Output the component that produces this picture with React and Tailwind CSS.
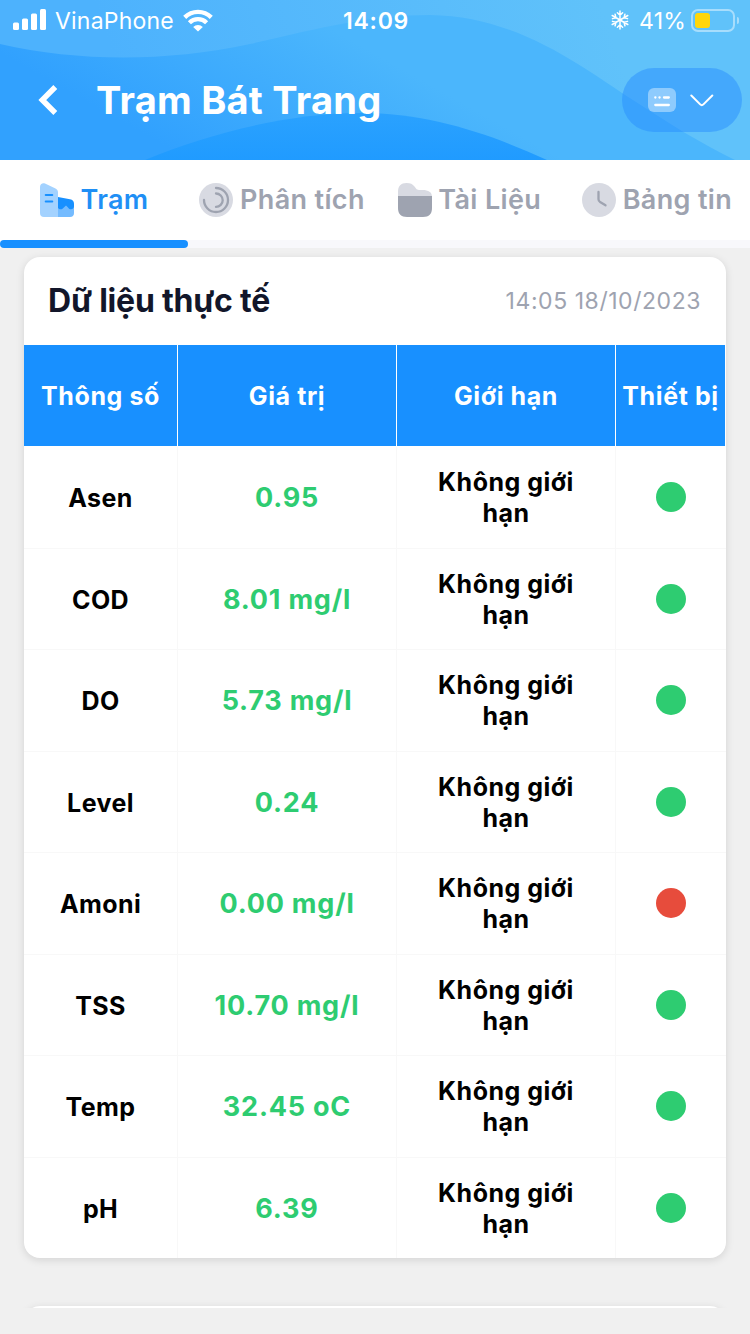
import { useState } from 'react'
import clsx from 'clsx'

const rows = [
  { name: 'Asen', value: '0.95', ok: true },
  { name: 'COD', value: '8.01 mg/l', ok: true },
  { name: 'DO', value: '5.73 mg/l', ok: true },
  { name: 'Level', value: '0.24', ok: true },
  { name: 'Amoni', value: '0.00 mg/l', ok: false },
  { name: 'TSS', value: '10.70 mg/l', ok: true },
  { name: 'Temp', value: '32.45 oC', ok: true },
  { name: 'pH', value: '6.39', ok: true },
]

/* ── ICONS ── */

function StationIcon() {
  return (
    <svg width="34" height="34" viewBox="0 0 34 34" className="shrink-0">
      <path d="M0 4C0 1.200 2.400-.6 5 .5L15 5.200c2 .9 3 2.200 3 4.300V34H4c-2.600 0-4-1.400-4-4Z" fill="#a3d2ff" />
      <path d="M18 22h16v8c0 2.600-1.400 4-4 4H18Z" fill="#74bbff" />
      <path d="M18 14l12 2.200c2.700.5 4 2 4 4.600v2.400c0 3.400-4.300 4.200-6 1.200l-2-2-3.500 3.400c-1.500 1-3.500.6-4.500-.8Z" fill="#1890ff" />
      <path d="M5.800 12h6.400M5.800 18.500h6.400" stroke="#1890ff" strokeWidth="2.200" strokeLinecap="round" />
    </svg>
  )
}

function AnalysisIcon() {
  return (
    <svg width="34" height="34" viewBox="0 0 34 34" fill="none" className="shrink-0">
      <circle cx="17" cy="17" r="17" fill="#d8dae2" />
      <path d="M17 5a12 12 0 1 1-12 12" stroke="#9ea3b0" strokeWidth="2.300" strokeLinecap="round" />
      <path d="M17 10.500a6.700 6.700 0 0 1 0 13.400" stroke="#9ea3b0" strokeWidth="2.300" strokeLinecap="round" />
    </svg>
  )
}

function FolderIcon() {
  return (
    <svg width="34" height="34" viewBox="0 0 34 34" className="shrink-0">
      <path d="M0 14V9c0-6 3-9 8.500-9 4 0 6 1 8 3.600l1.500 2c.8 1 1.500 1.400 3 1.400h3.500C30.500 7 34 9 34 14Z" fill="#d8dae2" />
      <path d="M0 13h34v12c0 6-3 9-9 9H9c-6 0-9-3-9-9Z" fill="#9ea3b0" />
    </svg>
  )
}

function ClockIcon() {
  return (
    <svg width="34" height="34" viewBox="0 0 34 34" fill="none" className="shrink-0">
      <circle cx="17" cy="17" r="17" fill="#d8dae2" />
      <path d="M16.500 9v7.200c0 1.300.5 2.200 1.600 2.900l5.400 3.200" stroke="#9ea3b0" strokeWidth="2.300" strokeLinecap="round" />
    </svg>
  )
}

function SignalIcon() {
  return (
    <svg width="33" height="22" viewBox="0 0 33 22" fill="#fff">
      <rect x="0" y="13.500" width="6" height="7.500" rx="1.500" />
      <rect x="9" y="9.500" width="6" height="11.500" rx="1.500" />
      <rect x="18" y="4.500" width="6" height="16.500" rx="1.500" />
      <rect x="27" y="0" width="6" height="21" rx="1.500" />
    </svg>
  )
}

function WifiIcon() {
  return (
    <svg width="30" height="23" viewBox="0 0 30 23" fill="none" stroke="#fff" strokeWidth="4.300">
      <path d="M1.700 8.400a19 19 0 0 1 26.600 0" />
      <path d="M6.400 13.700a12.200 12.200 0 0 1 17.200 0" />
      <path d="M10.200 18a6.700 6.700 0 0 1 9.600 0L15 22.600Z" fill="#fff" stroke="none" />
    </svg>
  )
}

function SnowIcon() {
  return (
    <svg width="18" height="20" viewBox="0 0 18 20" fill="none" stroke="#fff" strokeWidth="1.500" strokeLinecap="round">
      {[0, 60, 120, 180, 240, 300].map(a => (
        <path key={a} d="M9 10V1M6.400 2.800 9 5.300l2.600-2.500" transform={`rotate(${a} 9 10)`} />
      ))}
    </svg>
  )
}

/* ── HEADER ── */

function Waves() {
  return (
    <svg className="absolute inset-0" width="750" height="160" viewBox="0 0 750 160">
      <defs>
        <linearGradient id="top" gradientUnits="userSpaceOnUse" x1="150" y1="160" x2="600" y2="0">
          <stop offset="0" stopColor="#4db2fd" />
          <stop offset="1" stopColor="#60c2fa" />
        </linearGradient>
        <linearGradient id="mid" gradientUnits="userSpaceOnUse" x1="190" y1="160" x2="280" y2="0">
          <stop offset="0" stopColor="#31a1fe" />
          <stop offset="1" stopColor="#4bb6fc" />
        </linearGradient>
        <linearGradient id="low" gradientUnits="userSpaceOnUse" x1="0" y1="160" x2="0" y2="110">
          <stop offset="0" stopColor="#209bff" />
          <stop offset="1" stopColor="#2ba2fe" />
        </linearGradient>
      </defs>
      <rect width="750" height="160" fill="url(#top)" />
      <path d="M0 44C80 62 165 62 250 44C320 28 370 15 430 15C520 16 585 70 633 100C670 124 700 143 735 160H0Z" fill="url(#mid)" />
      <path d="M145 160C210 133 290 113 360 113C430 113 490 134 547 160Z" fill="url(#low)" />
    </svg>
  )
}

function StatusBar() {
  return (
    <div className="relative flex h-10 items-center text-[23px] text-white">
      <div className="flex flex-1 items-center pl-[13px]">
        <SignalIcon />
        <span className="ml-[9px] mr-[9px] pt-0.5 tracking-[0.2px]">VinaPhone</span>
        <WifiIcon />
      </div>
      <span className="pt-0.5 font-semibold tracking-[0.8px]">14:09</span>
      <div className="flex flex-1 items-center justify-end pr-[11px]">
        <SnowIcon />
        <span className="ml-[10px] mr-[5px] pt-0.5 tracking-[0.2px]">41%</span>
        <div className="h-[23px] w-[44px] rounded-[7px] border-2 border-white/45 p-[2px]">
          <div className="h-[15px] w-[15px] rounded-[3px] bg-[#ffd60a]" />
        </div>
        <div className="ml-[2px] h-[7px] w-[2px] rounded-r-full bg-white/45" />
      </div>
    </div>
  )
}

function Header() {
  return (
    <header className="relative h-[160px] overflow-hidden">
      <Waves />
      <StatusBar />
      <div className="relative flex h-[120px] items-center pl-[38px] pr-2">
        <svg width="20" height="30" viewBox="0 0 20 30" fill="none" stroke="#fff" strokeWidth="5.500">
          <path d="M17.300 2 4.300 15l13 13" />
        </svg>
        <h1 className="ml-[38px] flex-1 text-[38px] font-bold tracking-[0.25px] text-white">Trạm Bát Trang</h1>
        <button className="flex h-16 w-[120px] items-center gap-[14px] rounded-full bg-[#2389ff]/45 pl-[26px]">
          <svg width="28" height="24" viewBox="0 0 28 24" fill="none" stroke="#fff" strokeWidth="2.300" strokeLinecap="round">
            <rect width="28" height="24" rx="6" fill="#fff" fillOpacity=".4" stroke="none" />
            <path d="M7.300 9.500h.1M11.500 9.500h.1M16 9.500h4.800M7.300 17h13.500" />
          </svg>
          <svg width="24" height="14" viewBox="0 0 24 14" fill="none" stroke="#fff" strokeWidth="2" strokeLinecap="round">
            <path d="m1.300 2.500 8.900 8.900c1 1 2.200 1 3.200 0l8.900-8.900" />
          </svg>
        </button>
      </div>
    </header>
  )
}

/* ── TABS ── */

const tabs = [
  { label: 'Trạm', icon: StationIcon, gap: 'ml-10' },
  { label: 'Phân tích', icon: AnalysisIcon, gap: 'ml-[51px]' },
  { label: 'Tài Liệu', icon: FolderIcon, gap: 'ml-[33px]' },
  { label: 'Bảng tin', icon: ClockIcon, gap: 'ml-[41px]' },
]

function Tabs() {
  const [active, setActive] = useState(0)

  return (
    <nav className="bg-white">
      <div className="flex h-20 items-center">
        {tabs.map((tab, i) => (
          <button
            key={tab.label}
            onClick={() => setActive(i)}
            className={clsx(
              'flex shrink-0 items-center gap-[6.5px] whitespace-nowrap text-[27px] font-semibold tracking-[0.35px]',
              tab.gap,
              i === active ? 'text-[#1f8ff5]' : 'text-[#9ea3b0]'
            )}
          >
            <tab.icon />
            {tab.label}
          </button>
        ))}
      </div>
      <div className="h-2 bg-[#f8f8fb]">
        <div className="h-2 w-[188px] rounded-full bg-[#1890ff]" style={{ marginLeft: active * 188 }} />
      </div>
    </nav>
  )
}

/* ── TABLE ── */

function DataCard() {
  return (
    <section className="overflow-hidden rounded-2xl bg-white shadow-[0_2px_8px_rgba(0,0,0,0.12)]">
      <div className="flex h-[88px] items-center justify-between pl-[24px] pr-[25px]">
        <h2 className="text-[32px] font-bold tracking-[-0.22px] text-[#12162a]">Dữ liệu thực tế</h2>
        <span className="text-[23px] tracking-[0.55px] text-[#9ea3b0]">14:05 18/10/2023</span>
      </div>

      <div className="grid h-[101px] grid-cols-[154px_219px_219px_109px] text-[25px] font-bold tracking-[0.6px] text-white">
        {['Thông số', 'Giá trị', 'Giới hạn', 'Thiết bị'].map(h => (
          <div key={h} className="flex items-center justify-center whitespace-nowrap border-r border-white bg-[#1890ff] pt-0.5 last:border-r-0">
            {h}
          </div>
        ))}
      </div>

      {rows.map((row, i) => (
        <div
          key={row.name}
          className={clsx(
            'grid h-[101.5px] grid-cols-[154px_219px_219px_110px] border-t text-center text-[25px] font-bold leading-[31px] tracking-[0.5px] text-black',
            i === 0 ? 'border-white' : 'border-[#f8f8f8]'
          )}
        >
          <div className="flex items-center justify-center border-r border-[#f8f8f8] pt-[3px] tracking-[0.4px]">{row.name}</div>
          <div className="flex items-center justify-center border-r border-[#f8f8f8] pt-px text-[27px] tracking-[0.8px] text-[#2ecc71]">{row.value}</div>
          <div className="flex items-center justify-center border-r border-[#f8f8f8] px-8 pt-0.5">Không giới hạn</div>
          <div className="flex items-center justify-center">
            <span className={clsx('size-[30px] rounded-full', row.ok ? 'bg-[#2ecc71]' : 'bg-[#e74c3c]')} />
          </div>
        </div>
      ))}
    </section>
  )
}

export default function App() {
  return (
    <div className="h-[1334px] w-[750px] overflow-hidden bg-[#f0f0f0] font-[Inter,sans-serif]">
      <Header />
      <Tabs />
      <main className="h-[1060px] overflow-hidden px-6 pt-[9px]">
        <DataCard />
        {/* top edge of the next card, cut by the scroll area */}
        <section className="mt-12 h-40 rounded-2xl bg-white shadow-[0_2px_8px_rgba(0,0,0,0.12)]" />
      </main>
    </div>
  )
}
